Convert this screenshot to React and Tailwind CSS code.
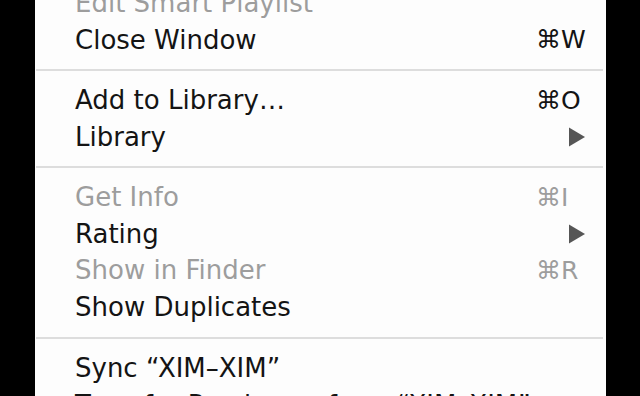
export default function App() {
  const row = (label, opts = {}) => {
    const { shortcut, submenu, disabled } = opts;
    return (
      <div
        className={`flex items-center h-[36.5px] pl-[40px] pr-[21px] ${
          disabled ? "text-[#9d9d9d]" : "text-[#141414]"
        }`}
      >
        <span className="flex-1 whitespace-nowrap">{label}</span>
        {shortcut && (
          <span className="w-[49px] shrink-0 whitespace-nowrap text-[25px]">{shortcut}</span>
        )}
        {submenu && (
          <svg viewBox="0 0 17 20" className="w-[17px] h-[20px] shrink-0">
            <path d="M1 0.5 L17 10 L1 19.5 Z" fill="#565656" />
          </svg>
        )}
      </div>
    );
  };

  const separator = () => (
    <div className="h-[24px] flex items-center pl-px pr-[3px]">
      <div className="h-[2px] w-full bg-[#dddddd]" />
    </div>
  );

  return (
    <div className="w-[640px] h-[396px] bg-black flex overflow-hidden">
      <div
        className="ml-[35px] w-[571px] h-full bg-[#fdfdfd] overflow-hidden text-[26px] leading-none"
        style={{ fontFamily: '"DejaVu Sans", "Lucida Grande", sans-serif' }}
      >
        <div className="-mt-[15px] flex flex-col">
          {row("Edit Smart Playlist", { disabled: true })}
          {row("Close Window", { shortcut: "⌘W" })}
          {separator()}
          {row("Add to Library…", { shortcut: "⌘O" })}
          {row("Library", { submenu: true })}
          {separator()}
          {row("Get Info", { shortcut: "⌘I", disabled: true })}
          {row("Rating", { submenu: true })}
          {row("Show in Finder", { shortcut: "⌘R", disabled: true })}
          {row("Show Duplicates")}
          <div className="h-[25px] flex flex-col pl-px pr-[3px] pt-[12px]">
            <div className="h-[2px] w-full bg-[#dddddd]" />
          </div>
          {row("Sync “XIM–XIM”")}
          {row("Transfer Purchases from “XIM–XIM”")}
        </div>
      </div>
    </div>
  );
}
